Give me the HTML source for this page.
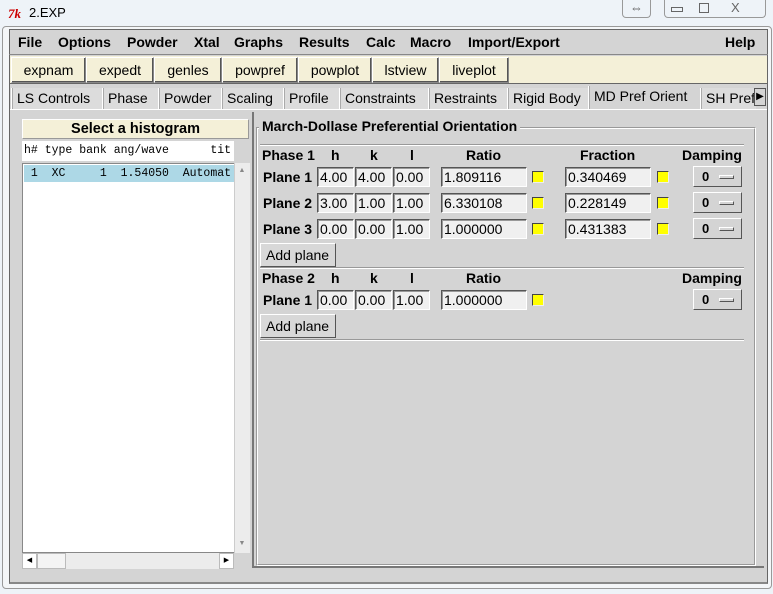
<!DOCTYPE html>
<html><head><meta charset="utf-8"><style>
*{box-sizing:border-box;margin:0;padding:0}
body{width:773px;height:594px;overflow:hidden;background:#eef3f8;font-family:"Liberation Sans",sans-serif;position:relative}
.a{position:absolute}
.b{font-weight:bold}
.menu span{position:absolute;top:5px;font-weight:bold;font-size:14px}
.tb{position:absolute;top:57px;height:26px;border:1px solid #888;border-top-color:#fff;border-left-color:#fff;box-shadow:inset -1px -1px 0 #555;font-size:14px;text-align:center;line-height:24px;background:#f4f0d8}
.tab{position:absolute;top:88px;height:21px;font-size:14px;line-height:20px;padding-left:5px;border-left:1px solid #fff;box-shadow:inset 1px 0 0 #aaa;background:#dcdcdc}
.e{position:absolute;height:20px;background:#f0f0f0;border:1px solid #fff;border-top-color:#555;border-left-color:#555;box-shadow:inset 1px 1px 0 #999;font-size:14px;line-height:18px;padding-left:2px}
.cb{position:absolute;width:12px;height:12px;background:#ffff00;border:1px solid #444;border-right-color:#eee;border-bottom-color:#eee}
.dm{position:absolute;width:49px;height:21px;border:1px solid #555;border-top-color:#fff;border-left-color:#fff;background:#d4d4d4;font-size:13px;font-weight:bold;line-height:19px}
.dm b{position:absolute;left:8px;top:0}
.dm i{position:absolute;left:25px;top:8px;width:15px;height:4px;border:1px solid #555;border-top-color:#fff;border-left-color:#fff}
.lbl{position:absolute;font-weight:bold;font-size:14px}
.btn{position:absolute;height:24px;border:1px solid #555;border-top-color:#fff;border-left-color:#fff;background:#d8d8d8;font-size:14px;line-height:22px;padding-left:5px}
.sep{position:absolute;height:2px;border-top:1px solid #999;border-bottom:1px solid #fff}
</style></head><body>
<div class="a" style="left:8px;top:6px;font-size:13px;color:#c00;font-style:italic;font-weight:bold;font-family:'Liberation Serif',serif">7k</div>
<div class="a" style="left:29px;top:5px;font-size:13px">2.EXP</div>
<div class="a" style="left:622px;top:0;width:29px;height:18px;border:1px solid #999;border-top:none;border-radius:0 0 4px 4px;font-size:13px;text-align:center;line-height:16px;color:#555">⇔</div>
<div class="a" style="left:664px;top:0;width:102px;height:18px;border:1px solid #999;border-top:none;border-radius:0 0 4px 4px"></div>
<div class="a" style="left:671px;top:7px;width:12px;height:5px;border:1px solid #666"></div>
<div class="a" style="left:699px;top:3px;width:10px;height:10px;border:1px solid #666"></div>
<div class="a" style="left:731px;top:0px;font-size:13px;color:#666">X</div>
<div class="a" style="left:2px;top:26px;width:770px;height:563px;border:1px solid #999;border-radius:4px;background:#f4f6f8"></div>
<div class="a" style="left:9px;top:29px;width:759px;height:555px;background:#d4d4d4;border:1px solid #666;border-bottom:2px solid #888"></div>
<div class="menu a" style="left:9px;top:29px;width:759px;height:26px;border-bottom:1px solid #888">
<span style="left:9px">File</span><span style="left:49px">Options</span><span style="left:118px">Powder</span><span style="left:185px">Xtal</span><span style="left:225px">Graphs</span><span style="left:290px">Results</span><span style="left:357px">Calc</span><span style="left:401px">Macro</span><span style="left:459px">Import/Export</span><span style="left:716px">Help</span></div>
<div class="a" style="left:10px;top:56px;width:757px;height:28px;background:#f4f0d8;border-bottom:1px solid #666"></div>
<div class="tb" style="left:11px;width:75px">expnam</div>
<div class="tb" style="left:86px;width:68px">expedt</div>
<div class="tb" style="left:154px;width:68px">genles</div>
<div class="tb" style="left:222px;width:76px">powpref</div>
<div class="tb" style="left:298px;width:74px">powplot</div>
<div class="tb" style="left:372px;width:67px">lstview</div>
<div class="tb" style="left:439px;width:70px">liveplot</div>
<div class="tab" style="left:11px;width:91px">LS Controls</div>
<div class="tab" style="left:102px;width:56px">Phase</div>
<div class="tab" style="left:158px;width:63px">Powder</div>
<div class="tab" style="left:221px;width:62px">Scaling</div>
<div class="tab" style="left:283px;width:56px">Profile</div>
<div class="tab" style="left:339px;width:89px">Constraints</div>
<div class="tab" style="left:428px;width:79px">Restraints</div>
<div class="tab" style="left:507px;width:81px">Rigid Body</div>
<div class="tab" style="left:588px;top:86px;height:24px;width:112px;background:#d4d4d4;line-height:20px">MD Pref Orient</div>
<div class="tab" style="left:700px;width:56px;overflow:hidden;white-space:nowrap">SH Pref</div>
<div class="a" style="left:754px;top:88px;width:12px;height:18px;background:#d4d4d4;border:1px solid #555;font-size:10px;line-height:16px;text-align:center">▶</div>
<div class="a" style="left:10px;top:109px;width:757px;height:1px;background:#fff"></div>
<div class="a" style="left:22px;top:119px;width:227px;height:20px;background:#f4f0d8;border:1px solid #999;border-top-color:#fff;border-left-color:#fff;font-weight:bold;font-size:14.5px;text-align:center;line-height:19px">Select a histogram</div>
<div class="a" style="left:22px;top:141px;width:212px;height:20px;background:#fff;font-family:'Liberation Mono',monospace;font-size:11.5px;line-height:20px;padding-left:2px;white-space:pre">h# type bank ang/wave      tit</div>
<div class="a" style="left:22px;top:163px;width:212px;height:390px;background:#fff;border:1px solid #888;border-right:none"></div>
<div class="a" style="left:24px;top:165px;width:210px;height:17px;background:#add8e6;font-family:'Liberation Mono',monospace;font-size:11.5px;line-height:17px;white-space:pre"> 1  XC     1  1.54050  Automat</div>
<div class="a" style="left:234px;top:163px;width:16px;height:390px;background:#ececec;border-left:1px solid #ccc"></div>
<div class="a" style="left:234px;top:163px;width:16px;height:16px;font-size:7px;color:#888;text-align:center;line-height:16px">▲</div>
<div class="a" style="left:234px;top:536px;width:16px;height:16px;font-size:7px;color:#888;text-align:center;line-height:16px">▼</div>
<div class="a" style="left:22px;top:553px;width:212px;height:16px;background:#ececec"></div>
<div class="a" style="left:22px;top:553px;width:15px;height:16px;border:1px solid #bbb;background:#fff;font-size:7px;text-align:center;line-height:14px">◀</div>
<div class="a" style="left:37px;top:553px;width:29px;height:16px;border:1px solid #bbb;background:#f4f4f4"></div>
<div class="a" style="left:219px;top:553px;width:15px;height:16px;border:1px solid #bbb;background:#fff;font-size:7px;text-align:center;line-height:14px">▶</div>
<div class="a" style="left:252px;top:112px;width:2px;height:456px;background:#777"></div>
<div class="a" style="left:254px;top:566px;width:510px;height:2px;background:#777"></div>
<div class="a" style="left:256px;top:127px;width:500px;height:439px;border:1px solid #999;border-right-color:#fff;border-bottom-color:#fff"></div>
<div class="a" style="left:257px;top:128px;width:498px;height:437px;border:1px solid #fff;border-right-color:#999;border-bottom-color:#999"></div>
<div class="a b" style="left:259px;top:118px;background:#d4d4d4;font-size:14px;padding:0 3px">March-Dollase Preferential Orientation</div>
<div class="sep" style="left:260px;top:144px;width:484px"></div>
<div class="lbl" style="left:262px;top:147px">Phase 1</div><div class="lbl" style="left:331px;top:147px">h</div><div class="lbl" style="left:370px;top:147px">k</div><div class="lbl" style="left:410px;top:147px">l</div><div class="lbl" style="left:466px;top:147px">Ratio</div><div class="lbl" style="left:580px;top:147px">Fraction</div><div class="lbl" style="left:682px;top:147px">Damping</div>
<div class="lbl" style="left:263px;top:169px">Plane 1</div>
<div class="e" style="left:317px;top:167px;width:37px">4.00</div><div class="e" style="left:355px;top:167px;width:37px">4.00</div><div class="e" style="left:393px;top:167px;width:37px">0.00</div>
<div class="e" style="left:441px;top:167px;width:86px">1.809116</div><div class="cb" style="left:532px;top:171px"></div>
<div class="e" style="left:565px;top:167px;width:86px">0.340469</div><div class="cb" style="left:657px;top:171px"></div>
<div class="dm" style="left:693px;top:166px"><b>0</b><i></i></div>
<div class="lbl" style="left:263px;top:195px">Plane 2</div>
<div class="e" style="left:317px;top:193px;width:37px">3.00</div><div class="e" style="left:355px;top:193px;width:37px">1.00</div><div class="e" style="left:393px;top:193px;width:37px">1.00</div>
<div class="e" style="left:441px;top:193px;width:86px">6.330108</div><div class="cb" style="left:532px;top:197px"></div>
<div class="e" style="left:565px;top:193px;width:86px">0.228149</div><div class="cb" style="left:657px;top:197px"></div>
<div class="dm" style="left:693px;top:192px"><b>0</b><i></i></div>
<div class="lbl" style="left:263px;top:221px">Plane 3</div>
<div class="e" style="left:317px;top:219px;width:37px">0.00</div><div class="e" style="left:355px;top:219px;width:37px">0.00</div><div class="e" style="left:393px;top:219px;width:37px">1.00</div>
<div class="e" style="left:441px;top:219px;width:86px">1.000000</div><div class="cb" style="left:532px;top:223px"></div>
<div class="e" style="left:565px;top:219px;width:86px">0.431383</div><div class="cb" style="left:657px;top:223px"></div>
<div class="dm" style="left:693px;top:218px"><b>0</b><i></i></div>
<div class="btn" style="left:260px;top:243px;width:76px">Add plane</div>
<div class="sep" style="left:260px;top:267px;width:484px"></div>
<div class="lbl" style="left:262px;top:270px">Phase 2</div><div class="lbl" style="left:331px;top:270px">h</div><div class="lbl" style="left:370px;top:270px">k</div><div class="lbl" style="left:410px;top:270px">l</div><div class="lbl" style="left:466px;top:270px">Ratio</div><div class="lbl" style="left:682px;top:270px">Damping</div>
<div class="lbl" style="left:263px;top:292px">Plane 1</div>
<div class="e" style="left:317px;top:290px;width:37px">0.00</div><div class="e" style="left:355px;top:290px;width:37px">0.00</div><div class="e" style="left:393px;top:290px;width:37px">1.00</div>
<div class="e" style="left:441px;top:290px;width:86px">1.000000</div><div class="cb" style="left:532px;top:294px"></div>
<div class="dm" style="left:693px;top:289px"><b>0</b><i></i></div>
<div class="btn" style="left:260px;top:314px;width:76px">Add plane</div>
<div class="sep" style="left:260px;top:339px;width:484px"></div>
</body></html>
